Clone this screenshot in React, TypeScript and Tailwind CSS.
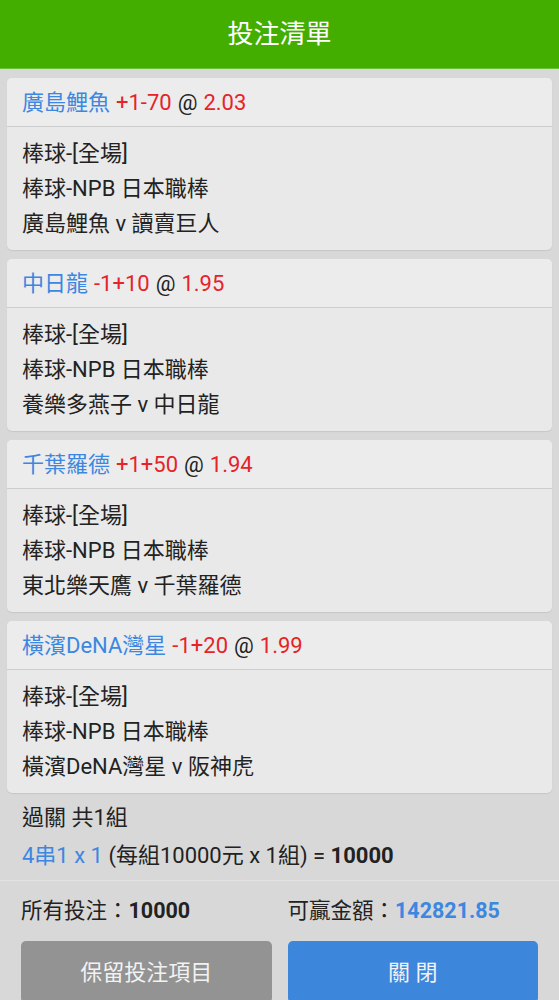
import React from "react";

const bets = [
  { team: "廣島鯉魚", line: "+1-70", odds: "2.03", match: "廣島鯉魚 v 讀賣巨人" },
  { team: "中日龍", line: "-1+10", odds: "1.95", match: "養樂多燕子 v 中日龍" },
  { team: "千葉羅德", line: "+1+50", odds: "1.94", match: "東北樂天鷹 v 千葉羅德" },
  { team: "橫濱DeNA灣星", line: "-1+20", odds: "1.99", match: "橫濱DeNA灣星 v 阪神虎" },
];

const font = "font-['Roboto','Noto_Sans_CJK_TC',sans-serif]";

const BetCard = ({ team, line, odds, match }: (typeof bets)[number]) => (
  <div className="mx-[7px] rounded-[5px] bg-[#e9e9e9] shadow-[0_1px_1px_rgba(0,0,0,0.08)] overflow-hidden">
    <div className="h-[49px] flex items-center px-[15px] bg-[#ececec] text-[22px] border-b border-[#cdcdcd]">
      <span className="text-[#3c87e0]">{team}</span>
      <span className="text-[#e62329] ml-[6px]">{line}</span>
      <span className="text-[#222] ml-[6px]">@</span>
      <span className="text-[#e62329] ml-[6px]">{odds}</span>
    </div>
    <div className="px-[15px] pt-[9px] pb-[9px] text-[22px] text-[#222] leading-[35px]">
      <div>棒球-[全場]</div>
      <div>棒球-NPB 日本職棒</div>
      <div>{match}</div>
    </div>
  </div>
);

export default function App() {
  return (
    <div className={`w-[559px] h-[1000px] overflow-hidden bg-[#d8d8d8] ${font}`}>
      <div className="h-[69px] bg-[#43ae00] flex items-center justify-center text-white text-[26px] border-b border-[#6cc23d]">
        投注清單
      </div>
      <div className="flex flex-col gap-[9px] pt-[9px]">
        {bets.map((b) => (
          <BetCard key={b.team} {...b} />
        ))}
      </div>
      <div className="px-[22px] pt-[6px] text-[22px] text-[#222] leading-[38px]">
        <div>過關 共1組</div>
        <div>
          <span className="text-[#3c87e0]">4串1 x 1</span> (每組10000元 x 1組) ={" "}
          <span className="font-bold">10000</span>
        </div>
      </div>
      <div className="mt-[5px] border-t border-[#e2e2e2] px-[21px]">
        <div className="grid grid-cols-2 gap-[16px] h-[60px] items-center text-[21.5px] text-[#222]">
          <div>
            所有投注：<span className="font-bold">10000</span>
          </div>
          <div>
            可贏金額：<span className="font-bold text-[#3c87e0]">142821.85</span>
          </div>
        </div>
        <div className="grid grid-cols-2 gap-[16px]">
          <button className="h-[62px] rounded-[5px] bg-[#939393] text-[#f2f2f2] text-[22px]">
            保留投注項目
          </button>
          <button className="h-[62px] rounded-[5px] bg-[#3c86dc] text-[#f2f2f2] text-[22px]">
            關 閉
          </button>
        </div>
      </div>
    </div>
  );
}
